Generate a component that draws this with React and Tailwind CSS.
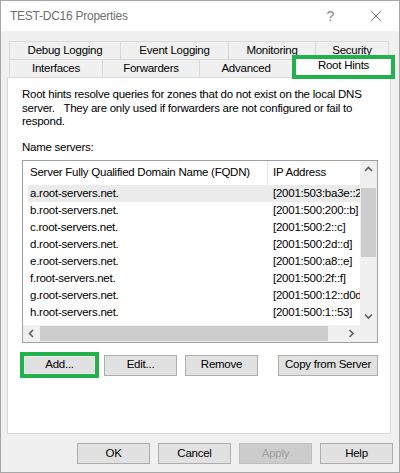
import React from 'react'

const servers = [
  ['a.root-servers.net.', '[2001:503:ba3e::2:30]'],
  ['b.root-servers.net.', '[2001:500:200::b]'],
  ['c.root-servers.net.', '[2001:500:2::c]'],
  ['d.root-servers.net.', '[2001:500:2d::d]'],
  ['e.root-servers.net.', '[2001:500:a8::e]'],
  ['f.root-servers.net.', '[2001:500:2f::f]'],
  ['g.root-servers.net.', '[2001:500:12::d0d]'],
  ['h.root-servers.net.', '[2001:500:1::53]'],
]

function Chevron({ dir }) {
  const pts = {
    up: '1,6 4.5,2.5 8,6',
    down: '1,2.5 4.5,6 8,2.5',
    left: '6,1 2.5,4.5 6,8',
    right: '2.5,1 6,4.5 2.5,8',
  }[dir]
  return (
    <svg width="9" height="9" viewBox="0 0 9 9">
      <polyline points={pts} fill="none" stroke="#606060" strokeWidth="1.6" />
    </svg>
  )
}

function Btn({ children, w = 'w-[73px]', disabled }) {
  return (
    <div
      className={`flex h-[21px] ${w} items-center justify-center border ${
        disabled ? 'border-[#bfbfbf] bg-[#cccccc] text-[#a0a0a0]' : 'border-[#adadad] bg-[#e1e1e1] text-black'
      }`}
    >
      {children}
    </div>
  )
}

function Tab({ children, w, last }) {
  return (
    <div
      className={`flex h-[18px] ${w} items-center justify-center border-l border-t border-[#d9d9d9] bg-[#f0f0f0] ${
        last ? 'border-r' : ''
      }`}
    >
      {children}
    </div>
  )
}

export default function App() {
  return (
    <div
      className="flex h-[473px] w-[400px] flex-col border border-[#a6a6a6] bg-[#f0f0f0] text-[11.5px] tracking-[-0.25px] text-black"
      style={{ fontFamily: '"Liberation Sans", Arial, sans-serif' }}
    >
      {/* title bar */}
      <div className="flex h-[30px] shrink-0 items-center bg-white pl-[9px] text-[#6f6f6f]">
        <span className="text-[12px]">TEST-DC16 Properties</span>
        <span className="ml-auto mr-[36px] text-[14px] font-light text-[#8a8a8a]">?</span>
        <svg width="12" height="12" viewBox="0 0 12 12" className="mr-[17px]">
          <path d="M1 1 L11 11 M11 1 L1 11" stroke="#7a7a7a" strokeWidth="1" fill="none" />
        </svg>
      </div>

      {/* tabs */}
      <div className="mt-[10px] flex pl-[8px]">
        <Tab w="w-[111px]">Debug Logging</Tab>
        <Tab w="w-[108px]">Event Logging</Tab>
        <Tab w="w-[87px]">Monitoring</Tab>
        <Tab w="w-[74px]" last>Security</Tab>
      </div>
      <div className="relative z-10 flex h-[18px] pl-[8px]">
        <Tab w="w-[93px]">Interfaces</Tab>
        <Tab w="w-[97px]">Forwarders</Tab>
        <Tab w="w-[93px]">Advanced</Tab>
        <div className="-mt-[4px] flex h-[24px] w-[103px] items-center justify-center border-4 border-[#21b24b] bg-white pb-[2px]">
          Root Hints
        </div>
      </div>

      {/* panel */}
      <div className="ml-[6px] flex h-[357px] w-[384px] flex-col border border-[#d9d9d9] bg-white pl-[14px] pr-[12px] pt-[10px]">
        <p className="leading-[13.5px] whitespace-nowrap">
          Root hints resolve queries for zones that do not exist on the local DNS
          <br />
          server.&nbsp;&nbsp; They are only used if forwarders are not configured or fail to
          <br />
          respond.
        </p>
        <p className="mt-[12px] leading-[13.5px]">Name servers:</p>

        {/* list */}
        <div className="mt-[6px] flex h-[183px] w-[356px] flex-col border border-[#a0a0a0]">
          <div className="flex min-h-0 flex-1">
            <div className="flex min-w-0 flex-1 flex-col overflow-hidden">
              <div className="flex h-[24px] shrink-0 items-center whitespace-nowrap">
                <div className="w-[244px] shrink-0 pl-[7px]">Server Fully Qualified Domain Name (FQDN)</div>
                <div className="h-full w-px shrink-0 bg-[#e5e5e5]" />
                <div className="shrink-0 pl-[5px]">IP Address</div>
              </div>
              {servers.map(([name, ip], i) => (
                <div
                  key={name}
                  className={`ml-[5px] flex h-[17px] shrink-0 items-center whitespace-nowrap ${
                    i === 0 ? 'bg-[#ebebeb]' : ''
                  }`}
                >
                  <div className="w-[239px] shrink-0 pl-[2px]">{name}</div>
                  <div className="shrink-0 pl-[6px]">{ip}</div>
                </div>
              ))}
            </div>
            <div className="flex w-[17px] shrink-0 flex-col items-center bg-[#f0f0f0]">
              <div className="flex h-[17px] items-center justify-center">
                <Chevron dir="up" />
              </div>
              <div className="mt-[10px] h-[69px] w-[15px] bg-[#cdcdcd]" />
              <div className="mt-auto flex h-[17px] items-center justify-center">
                <Chevron dir="down" />
              </div>
            </div>
          </div>
          <div className="flex h-[17px] shrink-0">
            <div className="flex flex-1 items-center bg-[#f0f0f0]">
              <div className="flex w-[17px] justify-center">
                <Chevron dir="left" />
              </div>
              <div className="h-[15px] w-[288px] bg-[#cdcdcd]" />
              <div className="ml-auto flex w-[17px] justify-center">
                <Chevron dir="right" />
              </div>
            </div>
            <div className="w-[17px] bg-[#f0f0f0]" />
          </div>
        </div>

        {/* list buttons */}
        <div className="mt-[9px] flex items-center">
          <div className="-ml-[2px] h-[26px] w-[79px] border-4 border-[#21b24b] bg-[#e1e1e1]">
            <div className="flex h-full w-full items-center justify-center border border-[#ececec]">Add...</div>
          </div>
          <div className="ml-[5px]">
            <Btn>Edit...</Btn>
          </div>
          <div className="ml-[8px]">
            <Btn>Remove</Btn>
          </div>
          <div className="ml-[20px]">
            <Btn w="w-[100px]">Copy from Server</Btn>
          </div>
        </div>
      </div>

      {/* dialog buttons */}
      <div className="mt-[9px] flex justify-end gap-[8px] pr-[6px]">
        <Btn>OK</Btn>
        <Btn>Cancel</Btn>
        <Btn disabled>Apply</Btn>
        <Btn>Help</Btn>
      </div>
    </div>
  )
}
